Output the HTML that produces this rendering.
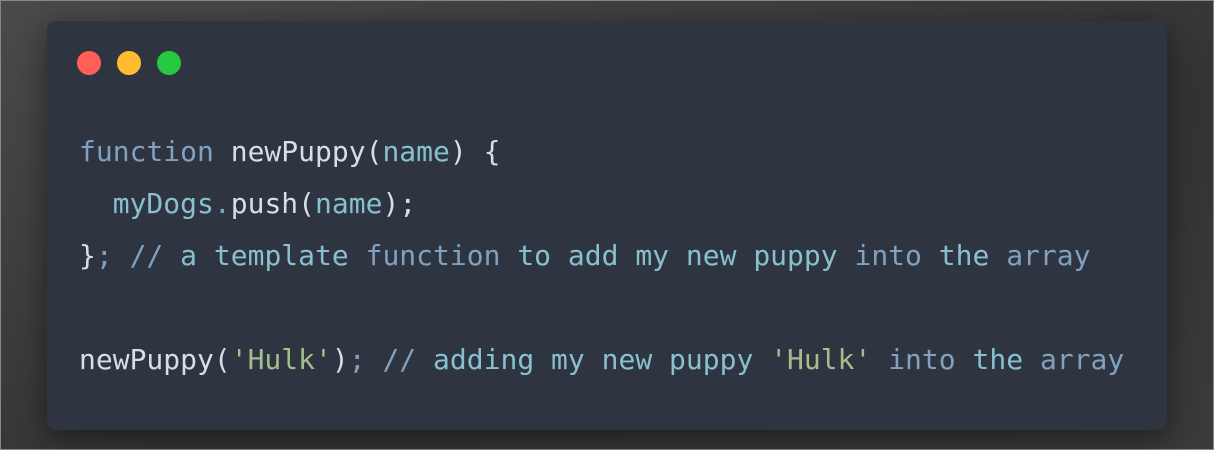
<!DOCTYPE html>
<html><head><style>
html,body{margin:0;padding:0;width:1214px;height:450px;overflow:hidden;background:#3f3f3f}
.outer{position:absolute;left:0;top:0;width:1212px;height:448px;border:1px solid #888;background:linear-gradient(160deg,#4a4a4a,#333 60%,#3a3a3a)}
.card{position:absolute;left:47px;top:21px;width:1120px;height:409px;background:#2e3440;border-radius:9px;box-shadow:0 8px 30px rgba(0,0,0,.45)}
.dot{position:absolute;top:51px;width:24px;height:24px;border-radius:50%}
pre{position:absolute;left:79px;top:126px;margin:0;font-family:"DejaVu Sans Mono","Liberation Mono",monospace;font-size:28px;line-height:52px;color:#d8dee9}
.k{color:#81a1c1}.v{color:#88c0d0}.s{color:#a3be8c}.p{color:#81a1c1}
</style></head><body>
<div class="outer"></div>
<div class="card"></div>
<div class="dot" style="left:77px;background:#ff5f56"></div>
<div class="dot" style="left:117px;background:#ffbd2e"></div>
<div class="dot" style="left:157px;background:#27c93f"></div>
<pre><span class="k">function</span> newPuppy(<span class="v">name</span>) {
  <span class="v">myDogs</span><span class="k">.</span>push(<span class="v">name</span>);
}<span class="k">; //</span> <span class="v">a template</span> <span class="k">function</span> <span class="v">to add my new puppy</span> <span class="k">into</span> <span class="v">the</span> <span class="k">array</span>

newPuppy(<span class="s">'Hulk'</span>)<span class="k">; //</span> <span class="v">adding my new puppy</span> <span class="s">'Hulk'</span> <span class="k">into</span> <span class="v">the</span> <span class="k">array</span></pre>
</body></html>
